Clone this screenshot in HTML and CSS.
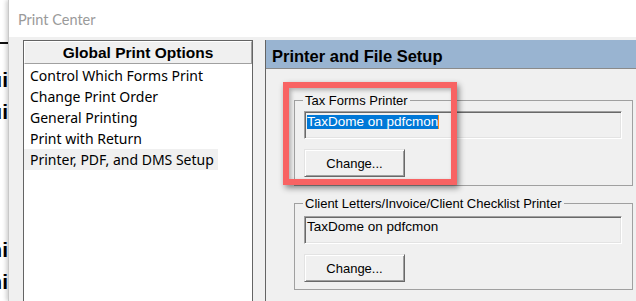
FILE: index.html
```html
<!DOCTYPE html>
<html>
<head>
<meta charset="utf-8">
<title>Print Center</title>
<link rel="stylesheet" href="styles.css">
</head>
<body>
<div class="desktop">
  <div class="bgwin" aria-hidden="true">
    <div class="bgline"></div>
    <div class="bgfrag f1">ui</div>
    <div class="bgfrag">ui</div>
    <div class="bgfrag f3">ni</div>
    <div class="bgfrag">ni</div>
  </div>
  <div class="win">
    <div class="titlebar">Print Center</div>
    <div class="wbody">
      <div class="leftpanel">
        <div class="lp-head">Global Print Options</div>
        <ul class="lp-list">
          <li>Control Which Forms Print</li>
          <li>Change Print Order</li>
          <li>General Printing</li>
          <li>Print with Return</li>
          <li class="sel">Printer, PDF, and DMS Setup</li>
        </ul>
      </div>
      <div class="rightpanel">
        <div class="rp-head">Printer and File Setup</div>
        <div class="rp-body">
          <fieldset class="group g1">
            <legend>Tax Forms Printer</legend>
            <div class="field"><span class="selected">TaxDome on pdfcmon</span></div>
            <button class="btn" type="button">Change...</button>
          </fieldset>
          <fieldset class="group g2">
            <legend>Client Letters/Invoice/Client Checklist Printer</legend>
            <div class="field">TaxDome on pdfcmon</div>
            <button class="btn" type="button">Change...</button>
          </fieldset>
          <div class="callout"></div>
        </div>
      </div>
    </div>
  </div>
</div>
</body>
</html>
```

FILE: styles.css
```css
html, body {
  margin: 0;
  padding: 0;
  background: #ffffff;
  overflow: hidden;
}

.desktop {
  display: flex;
  width: 636px;
  height: 301px;
  overflow: hidden;
}

/* background window peeking in at the left */
.bgwin {
  flex: none;
  width: 8px;
  background: #ffffff;
  overflow: hidden;
  padding-top: 42px;
  box-sizing: border-box;
}

.bgline {
  height: 2px;
  background: #111111;
}

.bgfrag {
  display: flex;
  justify-content: flex-end;
  white-space: nowrap;
  font: bold 21px/32px "Liberation Sans", Arial, sans-serif;
  color: #000000;
}

.bgfrag.f1 { margin-top: 20px; }
.bgfrag.f3 { margin-top: 106px; }

/* main window */
.win {
  flex: 1;
  min-width: 0;
  display: flex;
  flex-direction: column;
  border-left: 1px solid #c8c8c8;
  box-shadow: -2px 0 4px rgba(0, 0, 0, 0.18);
}

.titlebar {
  flex: none;
  height: 37px;
  box-sizing: border-box;
  padding: 2px 0 0 9px;
  background: #ffffff;
  font: 14.5px/35px Lato, "Noto Sans", sans-serif;
  color: #9a9a9a;
}

.wbody {
  flex: 1;
  display: flex;
  align-items: flex-start;
  gap: 12px;
  padding: 3px 0 0 14px;
  background: #f0f0f0;
  overflow: hidden;
}

/* left options list */
.leftpanel {
  flex: none;
  width: 230px;
  height: 300px;
  box-sizing: border-box;
  border: 1px solid #646464;
  background: #ffffff;
}

.lp-head {
  background: #f0f0f0;
  border-top: 1px solid #ffffff;
  border-left: 1px solid #ffffff;
  border-right: 1px solid #a0a0a0;
  border-bottom: 1px solid #a0a0a0;
  font: bold 15.5px/21px "Liberation Sans", Arial, sans-serif;
  text-align: center;
  color: #000000;
}

.lp-list {
  list-style: none;
  margin: 0;
  padding: 1px 0 0 0;
}

.lp-list li {
  height: 21px;
  padding-left: 6px;
  font: 14px/21px "Noto Sans", sans-serif;
  color: #000000;
  white-space: nowrap;
}

.lp-list li.sel {
  width: 194px;
  box-sizing: border-box;
  background: #f0f0f0;
}

/* right setup panel */
.rightpanel {
  flex: 1;
  min-width: 0;
  height: 300px;
  border-left: 1px solid #646464;
  background: #f0f0f0;
}

.rp-head {
  height: 24px;
  padding: 0 0 0 6px;
  background: #99b4d1;
  border-top: 4px solid #99b4d1;
  border-bottom: 1px solid #8a8a8a;
  font: bold 16.5px/24px "Liberation Sans", Arial, sans-serif;
  color: #000000;
}

.rp-body {
  position: relative;
  padding: 24px 0 0 28px;
}

.group {
  margin: 0;
  width: 339px;
  box-sizing: border-box;
  border: 1px solid #a0a0a0;
  padding: 3px 9px 8px 9px;
  min-width: 0;
}

.group.g2 {
  margin-top: 10px;
  padding-top: 5px;
  padding-bottom: 7px;
}

.group legend {
  margin-left: -1px;
  padding: 0 2px;
  font: 13px/15px "Liberation Sans", Arial, sans-serif;
  color: #000000;
  white-space: nowrap;
}

.field {
  width: 318px;
  height: 28px;
  box-sizing: border-box;
  border: 1px solid;
  border-color: #a0a0a0 #ffffff #ffffff #a0a0a0;
  box-shadow: inset 1px 1px 0 #696969, inset -1px -1px 0 #e3e3e3;
  padding: 3px 2px;
  background: #f0f0f0;
  font: 13.5px/14px "Liberation Sans", Arial, sans-serif;
  color: #000000;
  white-space: nowrap;
}

.selected {
  display: inline-block;
  background: #0078d7;
  color: #ffffff;
  border-right: 1px solid #ff8c1a;
}

.btn {
  display: block;
  margin: 10px 0 0 0;
  width: 101px;
  height: 28px;
  padding: 0;
  background: #f0f0f0;
  border: 1px solid;
  border-color: #e3e3e3 #696969 #696969 #e3e3e3;
  box-shadow: inset 1px 1px 0 #ffffff, inset -1px -1px 0 #a0a0a0;
  border-radius: 0;
  font: 13px "Liberation Sans", Arial, sans-serif;
  color: #000000;
}

/* red annotation box drawn over the form */
.callout {
  position: absolute;
  left: 17px;
  top: 13px;
  width: 174px;
  height: 103px;
  box-sizing: border-box;
  border: 6px solid #f86363;
  box-shadow: 2px 3px 6px rgba(0, 0, 0, 0.45), inset 2px 2px 4px rgba(0, 0, 0, 0.28);
  pointer-events: none;
}
```
